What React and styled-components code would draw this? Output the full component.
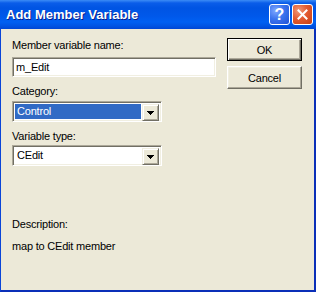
import React from "react";
import styled, { createGlobalStyle } from "styled-components";

const GlobalStyle = createGlobalStyle`
  html, body {
    margin: 0;
    padding: 0;
    background: #ece9d8;
  }
  * { box-sizing: border-box; }
`;

const font = `"Liberation Sans", Arial, sans-serif`;

const Window = styled.div`
  width: 316px;
  height: 292px;
  display: flex;
  flex-direction: column;
  background: #ece9d8;
  font-family: ${font};
  font-size: 11px;
  letter-spacing: -0.2px;
  color: #000;
  overflow: hidden;
`;

const TitleBar = styled.div`
  height: 29px;
  flex: none;
  display: flex;
  align-items: center;
  padding: 0 3px 0 6px;
  background: linear-gradient(
    180deg,
    #3c8cf6 0px,
    #0a5de9 3px,
    #0054e3 8px,
    #0058ea 16px,
    #0060f2 22px,
    #0054e3 26px,
    #0046d4 29px
  );
`;

const Title = styled.div`
  flex: 1;
  color: #fff;
  font-family: ${font};
  font-weight: bold;
  font-size: 13px;
  letter-spacing: 0;
  text-shadow: 1px 1px 0 #0a1e8a;
`;

const CaptionButton = styled.div`
  width: 21px;
  height: 21px;
  margin-left: 2px;
  border: 1px solid #fff;
  border-radius: 3px;
  display: flex;
  align-items: center;
  justify-content: center;
  background: ${(p) =>
    p.$close
      ? "radial-gradient(circle at 30% 30%, #f29a7a 0%, #e35b32 45%, #c73f13 100%)"
      : "radial-gradient(circle at 30% 30%, #7fa8ff 0%, #3c74ee 45%, #1f52d6 100%)"};
  color: #fff;
  font-weight: bold;
  font-size: 16px;
  letter-spacing: 0;
  font-family: ${font};
`;

const Frame = styled.div`
  flex: 1;
  display: flex;
  flex-direction: column;
  border-left: 1px solid #0a45d8;
  border-right: 2px solid #0a2fb8;
  border-bottom: 2px solid #0a2fb8;
`;

const Body = styled.div`
  display: flex;
  padding: 10px 11px 0 11px;
`;

const Fields = styled.div`
  flex: 1;
  display: flex;
  flex-direction: column;
`;

const Label = styled.div`
  line-height: 13px;
  height: 13px;
  margin-top: ${(p) => p.$top || 0}px;
  margin-bottom: ${(p) => p.$bottom ?? 5}px;
`;

const Edit = styled.div`
  width: 204px;
  height: 20px;
  background: #fff;
  border: 1px solid;
  border-color: #aca899 #fff #fff #aca899;
  box-shadow: inset 1px 1px 0 #716f64, inset -1px -1px 0 #f1efe2;
  padding: 2px 0 0 3px;
  line-height: 14px;
`;

const Combo = styled.div`
  width: 150px;
  height: 21px;
  display: flex;
  background: #fff;
  border: 1px solid;
  border-color: #aca899 #fff #fff #aca899;
  box-shadow: inset 1px 1px 0 #716f64, inset -1px -1px 0 #f1efe2;
  padding: 2px;
`;

const ComboText = styled.div`
  flex: 1;
  margin-right: 1px;
  line-height: 15px;
  padding-left: 2px;
  background: ${(p) => (p.$selected ? "#316ac5" : "transparent")};
  color: ${(p) => (p.$selected ? "#fff" : "#000")};
`;

const DropButton = styled.div`
  width: 17px;
  height: 17px;
  display: flex;
  align-items: center;
  justify-content: center;
  background: #ece9d8;
  border: 1px solid;
  border-color: #f1efe2 #716f64 #716f64 #f1efe2;
  box-shadow: inset 1px 1px 0 #fff, inset -1px -1px 0 #aca899;
`;

const Arrow = () => (
  <svg width="7" height="4" viewBox="0 0 7 4">
    <path d="M0 0h7v1h-1v1h-1v1h-1v1h-1v-1h-1v-1h-1v-1h-1z" fill="#000" />
  </svg>
);

const Buttons = styled.div`
  display: flex;
  flex-direction: column;
  gap: 5px;
  width: 75px;
  margin: -1px 1px 0 0;
`;

const Button = styled.div`
  width: 75px;
  height: 23px;
  display: flex;
  align-items: center;
  justify-content: center;
  background: #ece9d8;
  border: 1px solid;
  border-color: ${(p) =>
    p.$default ? "#000" : "#fff #716f64 #716f64 #fff"};
  box-shadow: ${(p) =>
    p.$default
      ? "inset 1px 1px 0 #fff, inset -1px -1px 0 #716f64, inset -2px -2px 0 #aca899"
      : "inset -1px -1px 0 #aca899, inset 1px 1px 0 #f1efe2"};
  font-size: 11px;
`;

const Description = styled.div`
  padding: 52px 11px 0 11px;
  display: flex;
  flex-direction: column;
  gap: 9px;
  line-height: 13px;
`;

export default function App() {
  return (
    <>
      <GlobalStyle />
      <Window>
        <TitleBar>
          <Title>Add Member Variable</Title>
          <CaptionButton>?</CaptionButton>
          <CaptionButton $close>
            <svg width="11" height="11" viewBox="0 0 11 11">
              <path
                d="M1.5 1.5L9.5 9.5M9.5 1.5L1.5 9.5"
                stroke="#fff"
                strokeWidth="2"
                strokeLinecap="square"
              />
            </svg>
          </CaptionButton>
        </TitleBar>
        <Frame>
          <Body>
            <Fields>
              <Label>Member variable name:</Label>
              <Edit>m_Edit</Edit>
              <Label $top={8} $bottom={3}>Category:</Label>
              <Combo>
                <ComboText $selected>Control</ComboText>
                <DropButton>
                  <Arrow />
                </DropButton>
              </Combo>
              <Label $top={8} $bottom={2}>Variable type:</Label>
              <Combo>
                <ComboText>CEdit</ComboText>
                <DropButton>
                  <Arrow />
                </DropButton>
              </Combo>
            </Fields>
            <Buttons>
              <Button $default>OK</Button>
              <Button>Cancel</Button>
            </Buttons>
          </Body>
          <Description>
            <div>Description:</div>
            <div>map to CEdit member</div>
          </Description>
        </Frame>
      </Window>
    </>
  );
}
